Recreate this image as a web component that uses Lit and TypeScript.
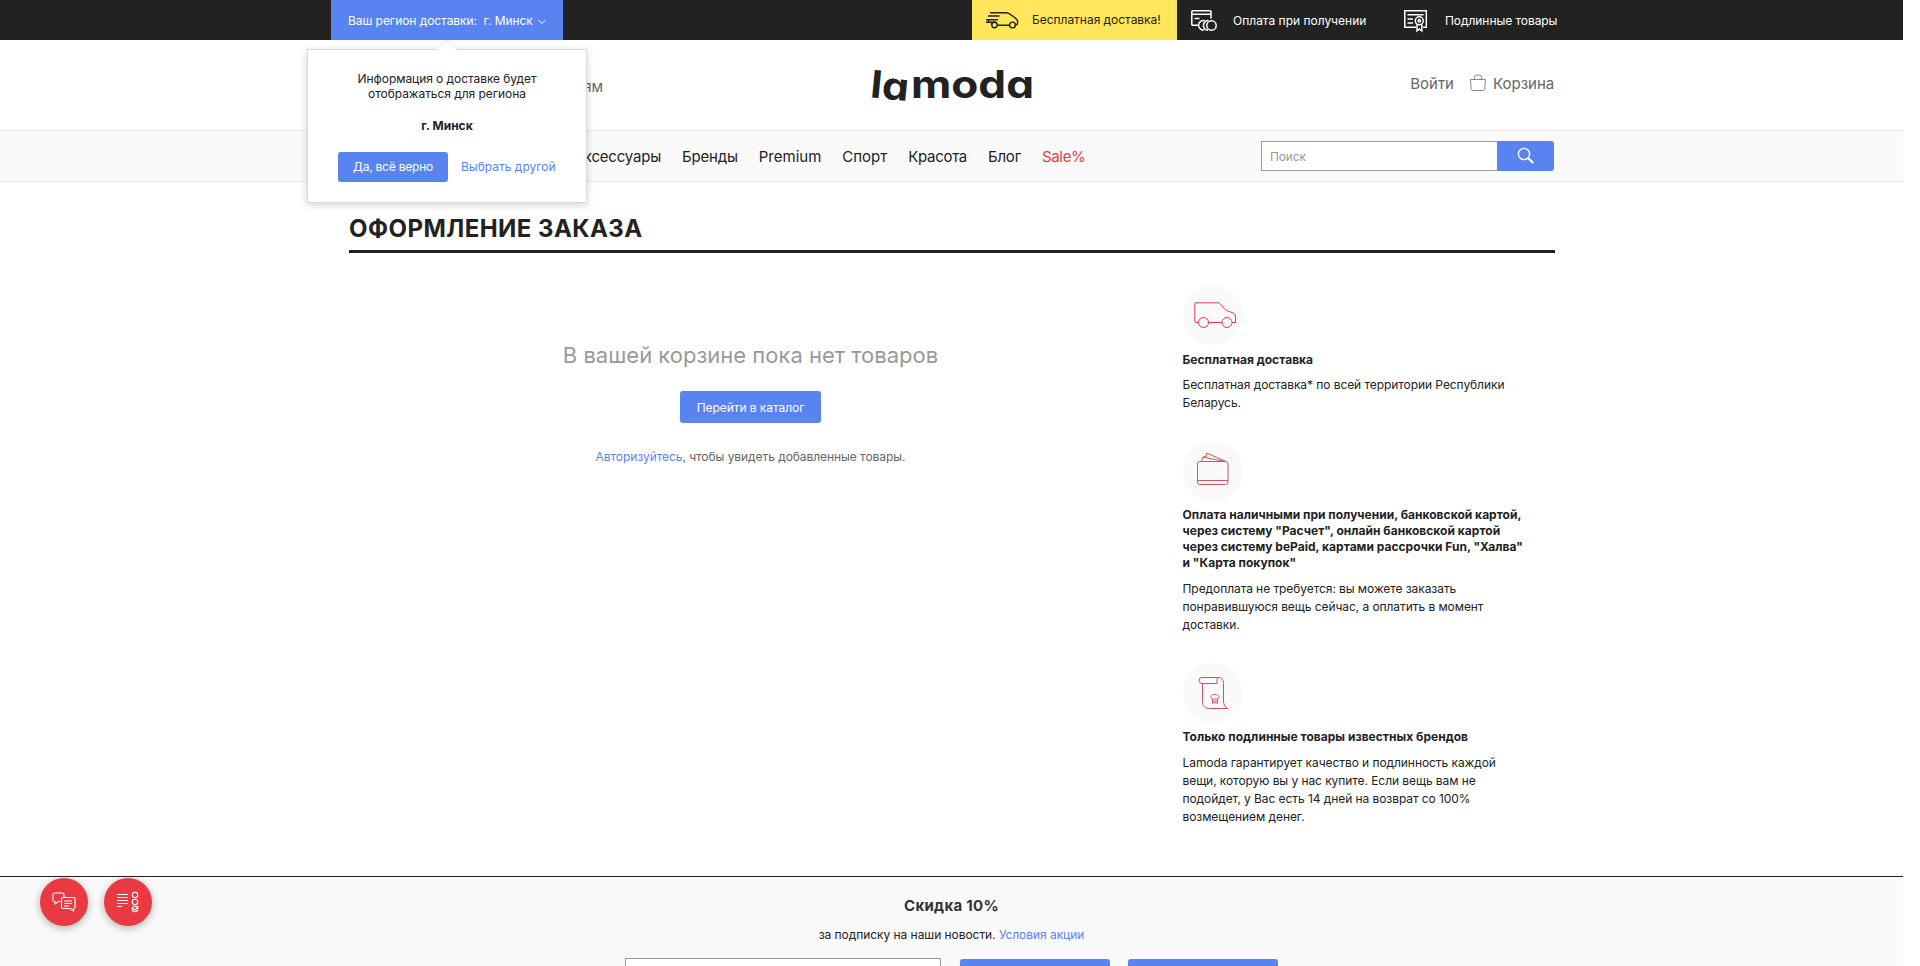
import { LitElement, html, css, svg } from "lit";
import { customElement } from "lit/decorators.js";

const truckFast = html`<svg width="34" height="18" viewBox="0 0 34 18" fill="none" stroke="#222" stroke-width="1.4">
  <path d="M5 1.700h16.500c4 .300 6 4 9 5.300l2 2.500v3.500l-1.700 1.300M24.500 14.300H12.400M3 5h11.500M1 8.800h12M3.500 9v2.700M1 11.300h8l1.500-.3M6 12.500l1 1"/>
  <circle cx="9.500" cy="14" r="2.700"/><circle cx="27.500" cy="14" r="2.900"/>
</svg>`;
const payIcon = html`<svg width="28" height="24" viewBox="0 0 28 24" fill="none" stroke="#fff" stroke-width="1.5">
  <path d="M21 9.500V2.800a1 1 0 0 0-1-1H2.800a1 1 0 0 0-1 1v12.400a1 1 0 0 0 1 1H8M2 5.300h19M4.500 9.500h5"/>
  <path d="M14 21a4.800 4.800 0 1 1 .6-9.400M18 21.300a4.800 4.800 0 1 1 .5-9.700"/>
  <circle cx="21.500" cy="16.500" r="4.700"/>
</svg>`;
const certIcon = html`<svg width="26" height="24" viewBox="0 0 26 24" fill="none" stroke="#fff" stroke-width="1.5">
  <path d="M13 18.300H1.800V1.800h21.500v16.500H20M4.500 5.800h16M4.500 10h5.500M4.500 14h5.500"/>
  <circle cx="16.300" cy="11.800" r="4"/><circle cx="16.300" cy="11.800" r="1.200"/>
  <path d="M14 15.500V22l2.400-2 2.400 2v-6.500"/>
</svg>`;

const red = "#e53b45";
const perks = [
  {
    icon: svg`<path d="M15.500 37.500H12.800a1 1 0 0 1-1-1V18.800a1 1 0 0 1 1-1H35c1.300 0 1.800.600 2.500 1.500l3.500 4c1 1.500 2 2 3.500 2.500l5.500 2.200c1.500.700 2.500 1.500 2.500 3v6.500h-3.300M39 37.500H25.500" stroke=${red}/>
      <circle cx="20.500" cy="37.500" r="5" stroke=${red}/><circle cx="44" cy="37.500" r="5" stroke=${red}/>`,
    title: ["Бесплатная доставка"],
    text: ["Бесплатная доставка* по всей территории Республики", "Беларусь."],
  },
  {
    icon: svg`<rect x="14.500" y="20.500" width="30.500" height="23" rx="2.500" stroke="#cf5560"/>
      <path d="M14.500 39.500H45M18.500 20.500l1.500-4.700h3.500M20 16.300 42.500 20.500M23 16l.5-4 19.500 8.500" stroke="#cf5560"/>`,
    title: ["Оплата наличными при получении, банковской картой,", "через систему \"Расчет\", онлайн банковской картой", "через систему bePaid, картами рассрочки Fun, \"Халва\"", "и \"Карта покупок\""],
    text: ["Предоплата не требуется: вы можете заказать", "понравившуюся вещь сейчас, а оплатить в момент", "доставки."],
  },
  {
    icon: svg`<path d="M34 20.500H19a3 3 0 0 1 0-6H35c3.500 0 5.500 2 5.500 6V38c0 4 1.500 6.500 4.500 7.500H27c-5 0-7.500-2.500-7.500-7V20.500M34 20.500V17c0-1.500.500-2.200 1.500-2.500" stroke="#d6505b"/>
      <path d="M29 36c-2-1.500-1.200-4.500 3-4.500s5 3 3 4.500zM29.500 36v4.500l2.500-1 2.500 1V36M29.500 38.200h5" stroke="#d6505b" stroke-width=".9"/>`,
    title: ["Только подлинные товары известных брендов"],
    text: ["Lamoda гарантирует качество и подлинность каждой", "вещи, которую вы у нас купите. Если вещь вам не", "подойдет, у Вас есть 14 дней на возврат со 100%", "возмещением денег."],
  },
];

@customElement("app-root")
export class AppRoot extends LitElement {
  static styles = css`
    :host { display: block; height: 966px; overflow: hidden; background: #fff; color: #222;
      font: 12px/18px Inter, "Noto Sans", sans-serif; letter-spacing: -0.06px; }
    * { box-sizing: border-box; }
    svg { display: block; flex: none; }
    .page { position: relative; width: 1903px; height: 966px; display: flex; flex-direction: column; overflow: hidden; }
    .topbar { height: 40px; flex: none; background: #222; color: #fff; display: flex; padding-left: 331px; }
    .region { width: 232px; height: 40px; background: #5983f1; display: flex; align-items: center; padding: 2px 0 0 17px; white-space: pre; }
    .region svg { margin: 1px 0 0 5px; }
    .free { margin-left: 409px; width: 205px; background: #ffe65b; color: #222; display: flex; align-items: center; padding-left: 13px; }
    .free span { margin-left: 13px; letter-spacing: -0.03px; }
    .perkbar { display: flex; align-items: center; padding-top: 2px; }
    .pay { padding-left: 13px; width: 226px; letter-spacing: 0; }
    .pay span { margin-left: 15px; }
    .cert span { margin-left: 16px; }
    .head { height: 90px; flex: none; display: grid; grid-template-columns: 603px 1fr 349px; color: #666; font-size: 15px; }
    .genders { grid-column: 1; grid-row: 1; text-align: right; padding-top: 38px; }
    .logo { grid-column: 2; grid-row: 1; margin: 15px 0 0 257px; }
    .logo text { font-family: Inter, sans-serif; font-weight: 700; font-feature-settings: "cv11"; fill: #222; letter-spacing: 0; }
    .account { grid-column: 2; grid-row: 1; justify-self: end; display: flex; padding-top: 35px; height: 60px; white-space: nowrap; letter-spacing: 0; }
    .bag { margin: -1px 6px 0 15px; }
    .account .cart { width: 61px; }
    .nav { height: 52px; flex: none; background: #fafafa; border-top: 1px solid #e9e9e9; border-bottom: 1px solid #e9e9e9; display: flex; align-items: center; font-size: 15px; letter-spacing: -0.2px; }
    .links { display: flex; width: 1261px; padding-top: 2px; }
    .nav .first { width: 661px; text-align: right; }
    .nav .item { margin-left: 21px; white-space: nowrap; }
    .nav .premium { letter-spacing: 0; }
    .nav .sport { letter-spacing: 0; }
    .nav .krasota { letter-spacing: -0.3px; }
    .nav .sale { color: #e93a44; letter-spacing: -0.35px; }
    .search { display: flex; height: 30px; }
    .query { width: 236px; border: 1px solid #999; border-right: 0; background: #fff; color: #999; font-size: 12px; line-height: 30px; padding-left: 8px; letter-spacing: -0.15px; }
    .find { width: 57px; background: #5983f1; border-radius: 0 3px 3px 0; display: flex; align-items: center; justify-content: center; }
    .main { width: 1206px; margin-left: 349px; height: 694px; flex: none; padding-top: 32px; }
    h1 { margin: 0; height: 39px; border-bottom: 3px solid #222; font-size: 24px; line-height: 30px; font-weight: 700; letter-spacing: 0.45px; }
    .cols { display: flex; }
    .empty { width: 803px; padding-top: 87px; display: flex; flex-direction: column; align-items: center; }
    .msg { font-size: 22px; line-height: 30px; color: #999; letter-spacing: 0; }
    .btn { background: #5983f1; color: #fff; border-radius: 3px; display: flex; align-items: center; justify-content: center; }
    .catalog { width: 141px; height: 32px; margin-top: 21px; padding-top: 1px; }
    .auth { margin-top: 25px; color: #666; }
    a { color: #5983f1; }
    .side { margin-left: 30.500px; padding-top: 32px; display: flex; flex-direction: column; gap: 29px; white-space: nowrap; letter-spacing: -0.07px; }
    .ptitle { margin-top: 6px; font-weight: 700; line-height: 16px; letter-spacing: 0.02px; }
    .pdesc { margin-top: 9px; }
    .side .perk:first-child .ptitle { margin-top: 7px; }
    .side .perk:first-child .pdesc { margin-top: 8px; }
    .footer { flex: 1; background: #fafafa; border-top: 1px solid #222; display: flex; flex-direction: column; align-items: center; }
    .discount { margin-top: 19px; font-size: 15px; line-height: 20px; font-weight: 700; letter-spacing: 0.3px; color: #333; }
    .terms { margin-top: 10px; line-height: 18px; letter-spacing: -0.05px; }
    .form { display: flex; margin-top: 14px; gap: 18px; }
    .mail { width: 316px; height: 34px; background: #fff; border: 1px solid #999; margin-right: 1px; }
    .sub { width: 150px; height: 32px; margin-top: 1px; }
    .popup { position: absolute; left: 307px; top: 49px; width: 280px; height: 154px; background: #fff; border: 1px solid #d9d9d9; box-shadow: 0 2px 8px rgba(0,0,0,.18); text-align: center; padding-top: 21px; line-height: 15px; }
    .arrow { position: absolute; left: 128px; top: -10px; }
    .popup .city { font-weight: 700; margin-top: 17px; letter-spacing: 0; }
    .choice { display: flex; align-items: center; padding-left: 30px; margin-top: 19px; gap: 13px; }
    .choice a { padding-bottom: 2px; letter-spacing: 0; }
    .yes { width: 110px; height: 30px; letter-spacing: -0.22px; padding-bottom: 1px; }
    .fabs { position: absolute; left: 40px; top: 878px; display: flex; gap: 16px; }
    .fab { width: 48px; height: 48px; border-radius: 50%; background: #e93a44; box-shadow: 0 2px 8px rgba(0,0,0,.3); display: flex; align-items: center; justify-content: center; }
  `;

  render() {
    return html`<div class="page">
      <div class="topbar">
        <div class="region"><span>Ваш регион доставки: </span><span> г. Минск</span>
          <svg width="8" height="6" viewBox="0 0 8 6" fill="none" stroke="#fff"><path d="M.5 1 4 4.500 7.500 1"/></svg></div>
        <div class="free">${truckFast}<span>Бесплатная доставка!</span></div>
        <div class="perkbar pay">${payIcon}<span>Оплата при получении</span></div>
        <div class="perkbar cert">${certIcon}<span>Подлинные товары</span></div>
      </div>
      <div class="head">
        <div class="genders">Детям</div>
        <svg class="logo" width="190" height="60" viewBox="0 -5 190 60">
          <text transform="translate(9.500 37.300) rotate(5.500)" font-size="38" textLength="38.500" lengthAdjust="spacingAndGlyphs">la</text>
          <text x="51" y="38" font-size="38.500" textLength="123" lengthAdjust="spacingAndGlyphs">moda</text>
        </svg>
        <div class="account"><span>Войти</span>
          <svg class="bag" width="18" height="18" viewBox="0 0 18 18" fill="none" stroke="#888"><path d="M1.500 5.500h15l-.7 9.500c-.1 1-.5 1.500-1.500 1.500H3.700c-1 0-1.400-.5-1.500-1.500zM5.500 5.500V3.500a2.500 2.500 0 0 1 2.500-2.500h2a2.500 2.500 0 0 1 2.500 2.500v2"/></svg>
          <span class="cart">Корзина</span></div>
      </div>
      <div class="nav">
        <div class="links">
          <span class="first">Аксессуары</span><span class="item">Бренды</span><span class="item premium">Premium</span><span class="item sport">Спорт</span><span class="item krasota">Красота</span><span class="item">Блог</span><span class="item sale">Sale%</span>
        </div>
        <div class="search"><div class="query">Поиск</div><div class="find">
          <svg width="18" height="18" viewBox="0 0 18 18" fill="none" stroke="#fff"><circle cx="7" cy="7" r="5.600" stroke-width="1.400"/><path d="m11 11 5.300 5" stroke-width="2.400"/></svg></div></div>
      </div>
      <div class="main">
        <h1>ОФОРМЛЕНИЕ ЗАКАЗА</h1>
        <div class="cols">
          <div class="empty">
            <div class="msg">В вашей корзине пока нет товаров</div>
            <div class="btn catalog">Перейти в каталог</div>
            <div class="auth"><a>Авторизуйтесь</a>, чтобы увидеть добавленные товары.</div>
          </div>
          <div class="side">${perks.map((p) => html`<div class="perk">
            <svg width="60" height="60" viewBox="0 0 60 60" fill="none"><circle cx="30" cy="30" r="30" fill="#fafafa"/>${p.icon}</svg>
            <div class="ptitle">${p.title.map((t) => html`<div>${t}</div>`)}</div>
            <div class="pdesc">${p.text.map((t) => html`<div>${t}</div>`)}</div>
          </div>`)}</div>
        </div>
      </div>
      <div class="footer">
        <div class="discount">Скидка 10%</div>
        <div class="terms">за подписку на наши новости. <a>Условия акции</a></div>
        <div class="form"><div class="mail"></div><div class="btn sub"></div><div class="btn sub"></div></div>
      </div>
      <div class="popup">
        <svg class="arrow" width="22" height="12" viewBox="0 0 22 12"><path d="M0 10.500 11 0l11 10.500V12H0z" fill="#fff"/><path d="M.5 9.800 11 .5l10.500 9.300" fill="none" stroke="#e2e2e2" stroke-width=".8"/></svg>
        <div>Информация о доставке будет<br>отображаться для региона</div>
        <div class="city">г. Минск</div>
        <div class="choice"><div class="btn yes">Да, всё верно</div><a>Выбрать другой</a></div>
      </div>
      <div class="fabs">
        <div class="fab"><svg width="24" height="20" viewBox="0 0 24 20" fill="none" stroke="#fff" stroke-width="1.100">
          <path d="M8.500 9.500H6.500L3 12V9.500H2.500a1.500 1.500 0 0 1-1.500-1.500V2.500A1.500 1.500 0 0 1 2.500 1h8A1.500 1.500 0 0 1 12 2.500v3"/>
          <path d="M11 5.500h10.500A1.500 1.500 0 0 1 23 7v8a1.500 1.500 0 0 1-1.500 1.500V19L18 16.500h-7A1.500 1.500 0 0 1 9.500 15V7A1.500 1.500 0 0 1 11 5.500zM12 9h8M12 11.500h8M12 14h5"/></svg></div>
        <div class="fab"><svg width="24" height="22" viewBox="0 0 24 22" fill="none" stroke="#fff" stroke-width="1.100">
          <path d="M1 3.500h11M1 6.500h11M1 9.500h11M1 12.500h11M1 15.500h5"/>
          <circle cx="19" cy="4" r="2.700"/><circle cx="19" cy="11" r="2.700"/><circle cx="19" cy="18" r="2.700"/><path d="m17.500 17.500 1.500 1.500 3.500-4"/></svg></div>
      </div>
    </div>`;
  }
}
